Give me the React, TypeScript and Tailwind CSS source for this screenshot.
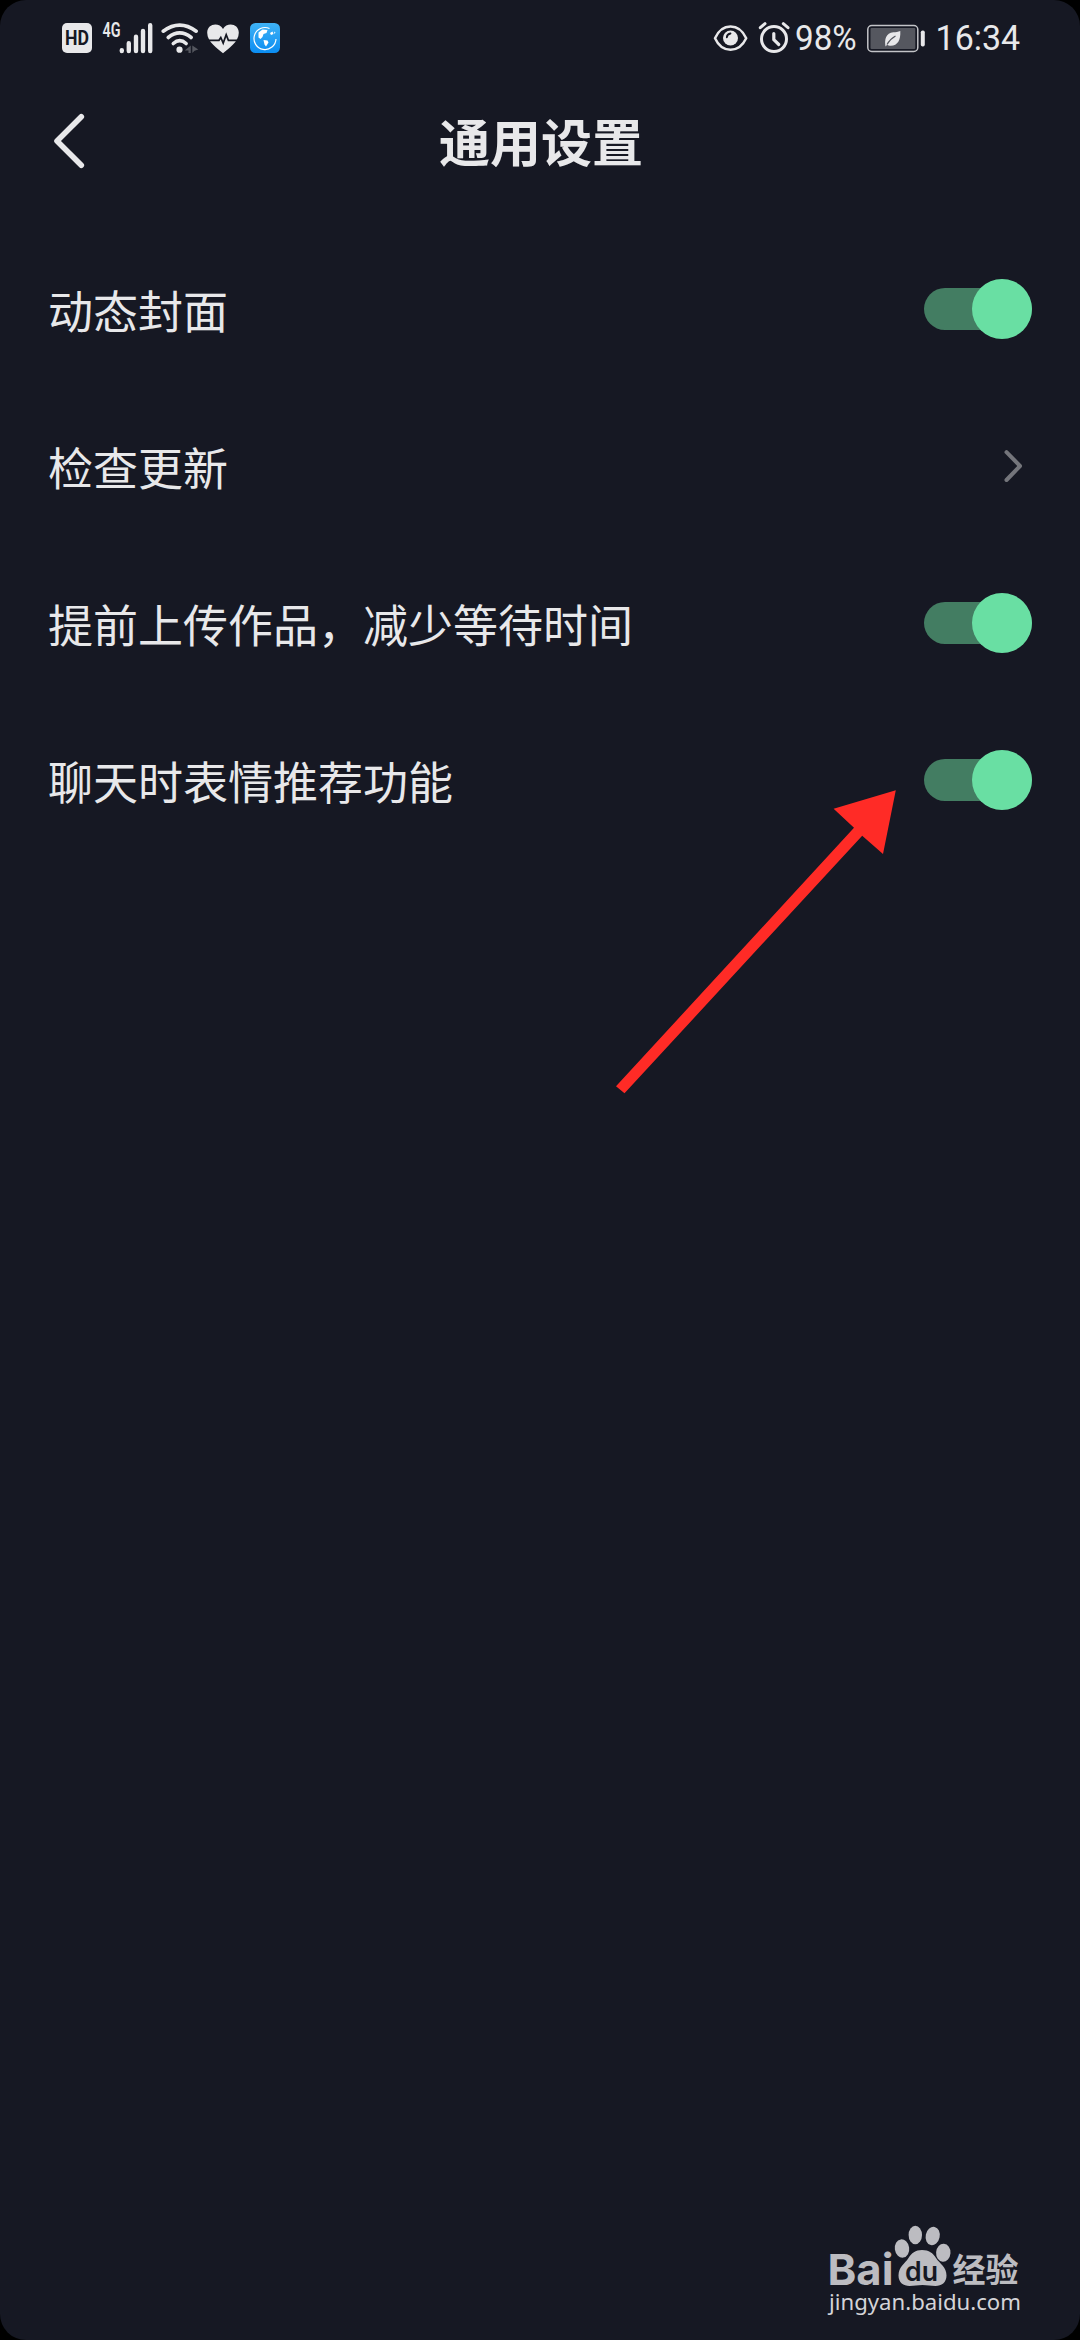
import type { ReactNode } from "react";

const FG = "#e8e8ea";

function HdIcon() {
  return (
    <svg className="ml-[62px]" width="30" height="30" viewBox="0 0 30 30">
      <rect width="30" height="30" rx="5" fill={FG} />
      <text x="3" y="22" textLength="24" lengthAdjust="spacingAndGlyphs" fontFamily="Roboto, sans-serif" fontWeight="700" fontSize="20" fill="#161823">
        HD
      </text>
    </svg>
  );
}

function SignalIcon() {
  return (
    <svg className="ml-[10px]" width="52" height="52" viewBox="102 11 52 52">
      <text x="102.5" y="36" textLength="18" lengthAdjust="spacingAndGlyphs" fontFamily="Roboto, sans-serif" fontWeight="600" fontSize="20" fill={FG}>
        4G
      </text>
      <g stroke={FG} strokeWidth="4.4" strokeLinecap="round">
        <path d="M121.8 49.2v.8M128.8 42.2v7.8M136 35.7v14.3M143 30v20M150.2 24.2v25.8" />
      </g>
    </svg>
  );
}

function WifiIcon() {
  return (
    <svg className="ml-[6px]" width="40" height="32" viewBox="160 21 40 32">
      <g fill="none" stroke={FG} strokeWidth="3.6" strokeLinecap="round">
        <path d="M163.2 30.2q16.5-12.2 33 0" />
        <path d="M168.2 36.5q11.5-9.2 23 0" />
        <path d="M173.300 42.500q6.400-5.800 12.800 0" />
      </g>
      <circle cx="179.500" cy="48.700" r="3.100" fill={FG} />
      <path d="M190.800 44.500v7.500h-2.300v-2.500h-3.800zM192.300 44.500l6 4-3.700 1.200-2.300 2.300z" fill="#55575f" />
    </svg>
  );
}

function HeartIcon() {
  return (
    <svg className="ml-[6px]" width="34" height="32" viewBox="206 21 34 32">
      <path d="M223 52.300C218 47.500 207.200 41.500 207.200 31.800c0-9.500 12-10.800 15.800-3.800 3.800-7 15.800-5.700 15.800 3.800 0 9.700-10.800 15.700-15.800 20.500z" fill={FG} />
      <path d="M207 39.300h12l1.800-2.800 2.400 5.600 3-8.500 2.200 5.700H239" fill="none" stroke="#161823" strokeWidth="1.700" />
    </svg>
  );
}

function GlobeIcon() {
  return (
    <svg className="ml-[10px]" width="30" height="30" viewBox="0 0 30 30">
      <defs>
        <linearGradient id="globe" x1="0" y1="0" x2="0" y2="1">
          <stop offset="0" stopColor="#3fb2f5" />
          <stop offset="1" stopColor="#0b8df2" />
        </linearGradient>
      </defs>
      <rect width="30" height="30" rx="5.500" fill="url(#globe)" />
      <path d="M19.500 5.500A11 11 0 1 0 26 16" fill="none" stroke="#fff" strokeWidth="1.200" />
      <path d="M8.500 9.500l4-3 5 .5-1 3-3 1-1 3-2 2-2-1.500zM13.500 17l4 .5 1 2-2.500 4-1.500-2zM20 10l2.500-1.500 1 2.500-2.500 1zM24 8.500l1.500 1-1 1.500z" fill="#fff" />
    </svg>
  );
}

function EyeIcon() {
  return (
    <svg width="36" height="30" viewBox="713 22 36 30">
      <path d="M715 37.200C722 21.500 739 21.500 746.200 37.200 739 52.500 722 52.500 715 37.200z" fill="none" stroke={FG} strokeWidth="2.500" strokeLinejoin="round" />
      <circle cx="730.500" cy="37" r="7.500" fill={FG} />
      <path d="M726.800 36.300q.3-3.300 3.700-3.800" fill="none" stroke="#161823" strokeWidth="1.800" strokeLinecap="round" />
    </svg>
  );
}

function AlarmIcon() {
  return (
    <svg className="ml-[8px]" width="34" height="34" viewBox="757 20 34 34">
      <g fill="none" stroke={FG} strokeLinecap="round" strokeLinejoin="round">
        <circle cx="774" cy="38" r="12.500" strokeWidth="3" />
        <path d="M760.300 26.700l4.700-4M788 26.700l-4.700-4" strokeWidth="3" />
        <path d="M773.800 32.500v6.200l5 4.800" strokeWidth="3.200" />
      </g>
    </svg>
  );
}

function BatteryIcon() {
  return (
    <svg className="ml-[9px]" width="60" height="30" viewBox="866 22 60 30">
      <rect x="867.800" y="24.500" width="50" height="26" rx="4" fill="none" stroke="#c3c4c8" strokeWidth="1.500" />
      <rect x="870.500" y="27" width="44.800" height="21" rx="1" fill="#55575f" />
      <rect x="920.800" y="29.500" width="4" height="16" rx="1.800" fill={FG} />
      <path d="M900.300 30c.5 9-2.500 14.500-9.500 14.800-1.500 0-2.800-.4-3.600-1l-1.700 1.700c-1.300-7 .5-13.500 7.800-14.200 2.500-.2 4.800-.3 7-1.300z" fill={FG} />
      <path d="M887 43.500q3-5.500 8.500-8.500" stroke="#55575f" strokeWidth="1.100" fill="none" />
    </svg>
  );
}

function StatusBar() {
  return (
    <header className="flex h-[76px] items-center justify-between font-['Roboto',sans-serif] text-[35px] leading-none text-[#e8e8ea]">
      <div className="flex items-center">
        <HdIcon />
        <SignalIcon />
        <WifiIcon />
        <HeartIcon />
        <GlobeIcon />
      </div>
      <div className="flex items-center pr-[60px]">
        <EyeIcon />
        <AlarmIcon />
        <span className="ml-[4px] flex w-[62px]">
          <span className="origin-left scale-x-[0.95]">98%</span>
        </span>
        <BatteryIcon />
        <span className="ml-[9px] flex w-[85px] justify-end">
          <span className="origin-right scale-x-[0.97]">16:34</span>
        </span>
      </div>
    </header>
  );
}

function Toggle() {
  return (
    <button type="button" role="switch" aria-checked="true" className="flex h-[60px] w-[108px] items-center">
      <span className="flex h-[42px] w-full items-center justify-end rounded-full bg-[#437d62]">
        <span className="size-[60px] shrink-0 rounded-full bg-[#69dfa3]" />
      </span>
    </button>
  );
}

function Chevron() {
  return (
    <svg className="mr-[8px]" width="22" height="34" viewBox="0 0 22 34">
      <path d="M4.500 3.200L18 17 4.500 31" fill="none" stroke="#74757b" strokeWidth="4" strokeLinecap="round" strokeLinejoin="round" />
    </svg>
  );
}

function Row({ label, children }: { label: string; children: ReactNode }) {
  return (
    <li className="flex h-[157px] items-center justify-between px-[48px]">
      <span className="pt-px text-[45px] leading-[60px] text-[#e8e8ea]">{label}</span>
      {children}
    </li>
  );
}

function Watermark() {
  return (
    <svg className="absolute right-[52px] bottom-[16px]" width="204" height="104" viewBox="824 2220 204 104">
      <g fill="#bcbcc1">
        <text x="827.500" y="2284.500" textLength="66" lengthAdjust="spacingAndGlyphs" fontFamily="Inter, sans-serif" fontWeight="700" fontSize="43">
          Bai
        </text>
        <ellipse cx="902" cy="2248.500" rx="7.200" ry="9.200" transform="rotate(-8 902 2248.500)" />
        <ellipse cx="915.300" cy="2235" rx="6.700" ry="9.300" />
        <ellipse cx="932.700" cy="2236" rx="7" ry="9.300" transform="rotate(12 932.700 2236)" />
        <ellipse cx="943.300" cy="2252.700" rx="7.200" ry="9" transform="rotate(4 943.300 2252.700)" />
        <path d="M922 2250c7 0 11 3 14 8 4 6 10.500 9 10.500 17.500 0 7-5 10.500-11 10.500-5 0-8-1-13-1s-8 1-13 1c-6 0-11-3.500-11-10.500 0-8.500 6-11.500 10-17.500 3-5 7-8 13.500-8z" />
        <text x="952.500" y="2281.500" textLength="66" lengthAdjust="spacingAndGlyphs" fontFamily="'Noto Sans CJK SC', sans-serif" fontWeight="700" fontSize="33">
          经验
        </text>
      </g>
      <text x="905" y="2280.500" textLength="33" lengthAdjust="spacingAndGlyphs" fontFamily="Inter, sans-serif" fontWeight="600" fontSize="27" fill="#161823">
        du
      </text>
      <text x="829" y="2310" textLength="192" lengthAdjust="spacingAndGlyphs" fontFamily="'Noto Sans', sans-serif" fontWeight="400" fontSize="22.500" fill="#d4d4d8">
        jingyan.baidu.com
      </text>
    </svg>
  );
}

function Arrow() {
  return (
    <svg className="pointer-events-none absolute top-[785px] left-[610px]" width="290" height="315" viewBox="610 785 290 315">
      <path d="M895.800 790.300L833.600 808.700 854 827.700 616 1086.300 624.500 1093.300 862.200 835.700 883 854z" fill="#ff2b26" />
    </svg>
  );
}

export default function App() {
  return (
    <div className="h-[2340px] w-[1080px] bg-black">
      <main className="relative h-full overflow-hidden rounded-[26px] bg-[#161823] font-['Noto_Sans_CJK_SC',sans-serif]">
        <StatusBar />
        <nav className="grid h-[130px] grid-cols-[1fr_auto_1fr] items-center">
          <svg className="ml-[51px]" width="36" height="60" viewBox="51 111 36 60">
            <path d="M81.300 116.800L57 141l24.300 24.300" fill="none" stroke={FG} strokeWidth="5.600" strokeLinecap="round" strokeLinejoin="round" />
          </svg>
          <h1 className="pb-[2px] pl-[2px] text-[51px] leading-[70px] font-bold text-[#e8e8ea]">通用设置</h1>
        </nav>
        <ul className="pt-[24.5px]">
          <Row label="动态封面">
            <Toggle />
          </Row>
          <Row label="检查更新">
            <Chevron />
          </Row>
          <Row label="提前上传作品，减少等待时间">
            <Toggle />
          </Row>
          <Row label="聊天时表情推荐功能">
            <Toggle />
          </Row>
        </ul>
        <Arrow />
        <Watermark />
      </main>
    </div>
  );
}
